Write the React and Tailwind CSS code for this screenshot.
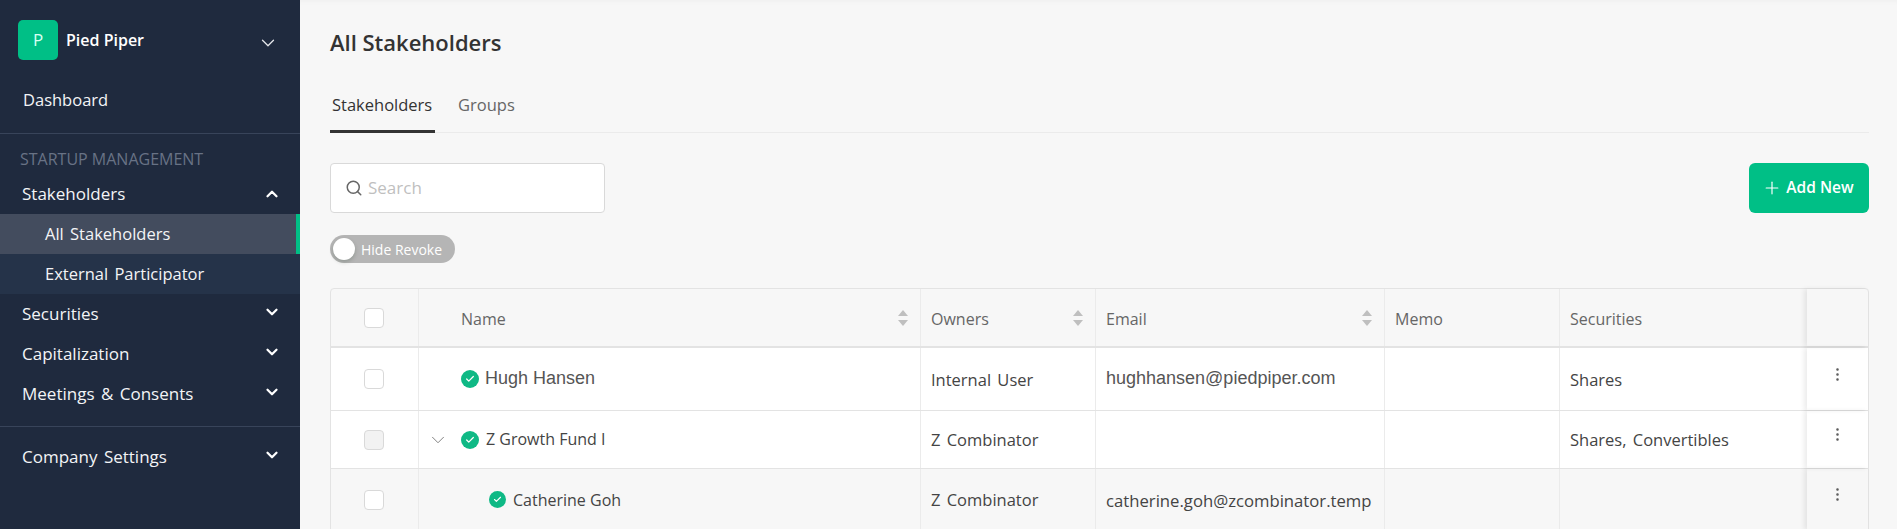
import React from 'react';
import { ChevronDown, ChevronUp, Search, Plus, EllipsisVertical, Check } from 'lucide-react';

const cols = 'grid grid-cols-[87px_502px_175px_289px_175px_248px_61px]';
const arial = "font-['Liberation_Sans',sans-serif]";

const NavItem = ({ label, open }) => (
  <div className="flex items-center justify-between h-10 pl-[22px] pr-[19px] text-[17px] text-[#f3f4f6] [word-spacing:2px]">
    <span>{label}</span>
    {open
      ? <ChevronUp size={18} strokeWidth={3} className="text-white" />
      : <ChevronDown size={18} strokeWidth={3} className="text-white -mt-1" />}
  </div>
);

const Sidebar = () => (
  <aside className="w-[300px] shrink-0 h-full bg-[#1f2a3e] flex flex-col">
    <div className="flex items-center pl-[18px] pr-[21px] pt-5">
      <div className="w-10 h-10 rounded-[5px] bg-[#00bf86] text-[#d8fff2] text-[17px] flex items-center justify-center">P</div>
      <span className="ml-2 text-[16px] font-semibold text-white">Pied Piper</span>
      <ChevronDown size={22} strokeWidth={1.4} className="ml-auto mt-[6px] text-[#e5e7eb]" />
    </div>
    <div className="h-[74px] pl-[23px] pt-7 text-[16.5px] leading-[24px] text-[#f3f4f6] border-b border-[#38445a]">Dashboard</div>
    <div className="pl-5 pt-[15px] h-10 text-[16px] leading-[20px] text-[#687285]">STARTUP MANAGEMENT</div>
    <NavItem label="Stakeholders" open />
    <div className="h-10 flex items-center pl-[45px] text-[16.5px] text-[#f3f4f6] bg-[#434c5e] border-r-4 border-[#00bf86] [word-spacing:2px]">All Stakeholders</div>
    <div className="h-10 flex items-center pl-[45px] text-[16.5px] text-[#f3f4f6] bg-[#253349] [word-spacing:2px]">External Participator</div>
    <NavItem label="Securities" />
    <NavItem label="Capitalization" />
    <NavItem label="Meetings & Consents" />
    <div className="mt-3 border-t border-[#38445a] pt-[10px]">
      <NavItem label="Company Settings" />
    </div>
  </aside>
);

const SortArrows = () => (
  <svg width="10" height="16" viewBox="0 0 10 16" className="shrink-0">
    <path d="M5 0 L10 6 L0 6 Z" fill="#bfbfbf" />
    <path d="M5 16 L10 10 L0 10 Z" fill="#bfbfbf" />
  </svg>
);

const Checkbox = ({ muted }) => (
  <div className={`w-5 h-5 -ml-[2px] rounded-[4px] border border-[#d9d9d9] ${muted ? 'bg-[#f2f2f2]' : 'bg-white'}`} />
);

const Verified = ({ size = 18 }) => (
  <span className="shrink-0 rounded-full bg-[#0fb985] flex items-center justify-center" style={{ width: size, height: size }}>
    <Check size={size - 8} strokeWidth={3} className="text-white" />
  </span>
);

const HeadCell = ({ label, sort, className = 'pl-[10px]' }) => (
  <div className={`flex items-center justify-between pr-3 border-l border-[#ebebeb] text-[16px] text-[#666666] ${className}`}>
    <span className="pt-[2px]">{label}</span>
    {sort && <SortArrows />}
  </div>
);

const Cell = ({ children }) => (
  <div className="flex items-center pl-[10px] pt-[2px] border-l border-[#ebebeb] text-[16.5px] text-[#444444] whitespace-nowrap [word-spacing:2px]">
    {children}
  </div>
);

const Actions = ({ className }) => (
  <div className={`relative flex justify-center shadow-[-3px_0_5px_rgba(0,0,0,0.08)] ${className}`}>
    <EllipsisVertical size={17} strokeWidth={1.6} className="text-[#555555]" />
  </div>
);

const rows = [
  {
    height: 'h-[63px]', bg: 'bg-white', name: 'Hugh Hansen', nameClass: `${arial} text-[#555555] text-[18px] ml-[6px] -mt-[1px]`, dots: 'pt-[18px]',
    owner: 'Internal User', email: 'hughhansen@piedpiper.com', emailClass: `${arial} text-[18px] text-[#555555] -mt-[4px]`, securities: 'Shares',
  },
  {
    height: 'h-[58px]', bg: 'bg-white', name: 'Z Growth Fund I', nameClass: 'text-[16px] text-[#444444] ml-[7px] -mt-[1px]', caret: true, muted: true, dots: 'pt-[15px]',
    owner: 'Z Combinator', email: '', securities: 'Shares, Convertibles',
  },
  {
    height: 'h-[61px]', bg: 'bg-[#f7f7f7]', name: 'Catherine Goh', nameClass: 'text-[16px] text-[#444444] ml-[7px]', child: true, dots: 'pt-[17px]',
    owner: 'Z Combinator', email: 'catherine.goh@zcombinator.temp', emailClass: 'text-[16.7px] [word-spacing:0]', securities: '',
  },
];

const Table = () => (
  <div className="mt-[25px] border border-[#e3e3e3] rounded-t-[4px] bg-[#f7f7f7]">
    <div className={`${cols} h-[59px] border-b-2 border-[#e3e3e3]`}>
      <div className="flex items-center justify-center"><Checkbox /></div>
      <HeadCell label="Name" sort className="pl-[42px]" />
      <HeadCell label="Owners" sort />
      <HeadCell label="Email" sort />
      <HeadCell label="Memo" />
      <HeadCell label="Securities" />
      <div className="relative shadow-[-3px_0_5px_rgba(0,0,0,0.08)]" />
    </div>
    {rows.map((row, i) => (
      <div key={row.name} className={`${cols} ${row.height} ${row.bg} ${i < 2 ? 'border-b border-[#e3e3e3]' : ''}`}>
        <div className="flex items-center justify-center"><Checkbox muted={row.muted} /></div>
        <div className={`flex items-center border-l border-[#ebebeb] ${row.child ? 'pl-[70px]' : 'pl-[9px]'}`}>
          {!row.child && (
            <span className="w-[33px] shrink-0 flex justify-start -ml-[1px] pr-[1px] box-content">
              {row.caret && <ChevronDown size={22} strokeWidth={1} className="text-[#777777]" />}
            </span>
          )}
          <Verified size={row.child ? 17 : 18} />
          <span className={row.nameClass}>{row.name}</span>
        </div>
        <Cell>{row.owner}</Cell>
        <Cell><span className={row.emailClass}>{row.email}</span></Cell>
        <Cell />
        <Cell>{row.securities}</Cell>
        <Actions className={row.dots} />
      </div>
    ))}
  </div>
);

const App = () => (
  <div className="font-['Open_Sans',sans-serif] w-[1897px] h-[529px] overflow-hidden flex bg-[#f7f7f7]">
    <Sidebar />
    <main className="flex-1 pl-[30px] pr-[28px] shadow-[inset_0_6px_6px_-6px_rgba(0,0,0,0.05)]">
      <h1 className="pt-[25px] text-[22px] leading-[34px] font-semibold text-[#333333]">All Stakeholders</h1>
      <div className="mt-[35px] h-[39px] flex border-b border-[#ebebeb] text-[16.5px] leading-[22px]">
        <div className="h-[39px] px-[2px] w-[105px] border-b-[3px] border-[#333333] text-[#333333]">Stakeholders</div>
        <div className="ml-[23px] text-[#666666]">Groups</div>
      </div>
      <div className="mt-[30px] flex items-start justify-between">
        <div className="w-[275px] h-[50px] rounded-[4px] border border-[#d9d9d9] bg-white flex items-center pl-[14px] text-[17px] text-[#bfbfbf]">
          <Search size={18} strokeWidth={2} className="text-[#666666]" />
          <span className="ml-[5px]">Search</span>
        </div>
        <button className="w-[120px] h-[50px] rounded-[6px] bg-[#00bf86] text-white text-[15.5px] font-semibold flex items-center justify-center gap-[4px] pr-[2px]">
          <Plus size={20} strokeWidth={1.4} />
          Add New
        </button>
      </div>
      <div className="mt-[22px] w-[125px] h-7 rounded-full bg-[#b5b5b5] flex items-center pl-[3px] text-[14px] text-white">
        <span className="w-[22px] h-[22px] rounded-full bg-white shadow-[0_2px_4px_rgba(0,35,11,0.2)]" />
        <span className="ml-[6px]">Hide Revoke</span>
      </div>
      <Table />
    </main>
  </div>
);

export default App;
